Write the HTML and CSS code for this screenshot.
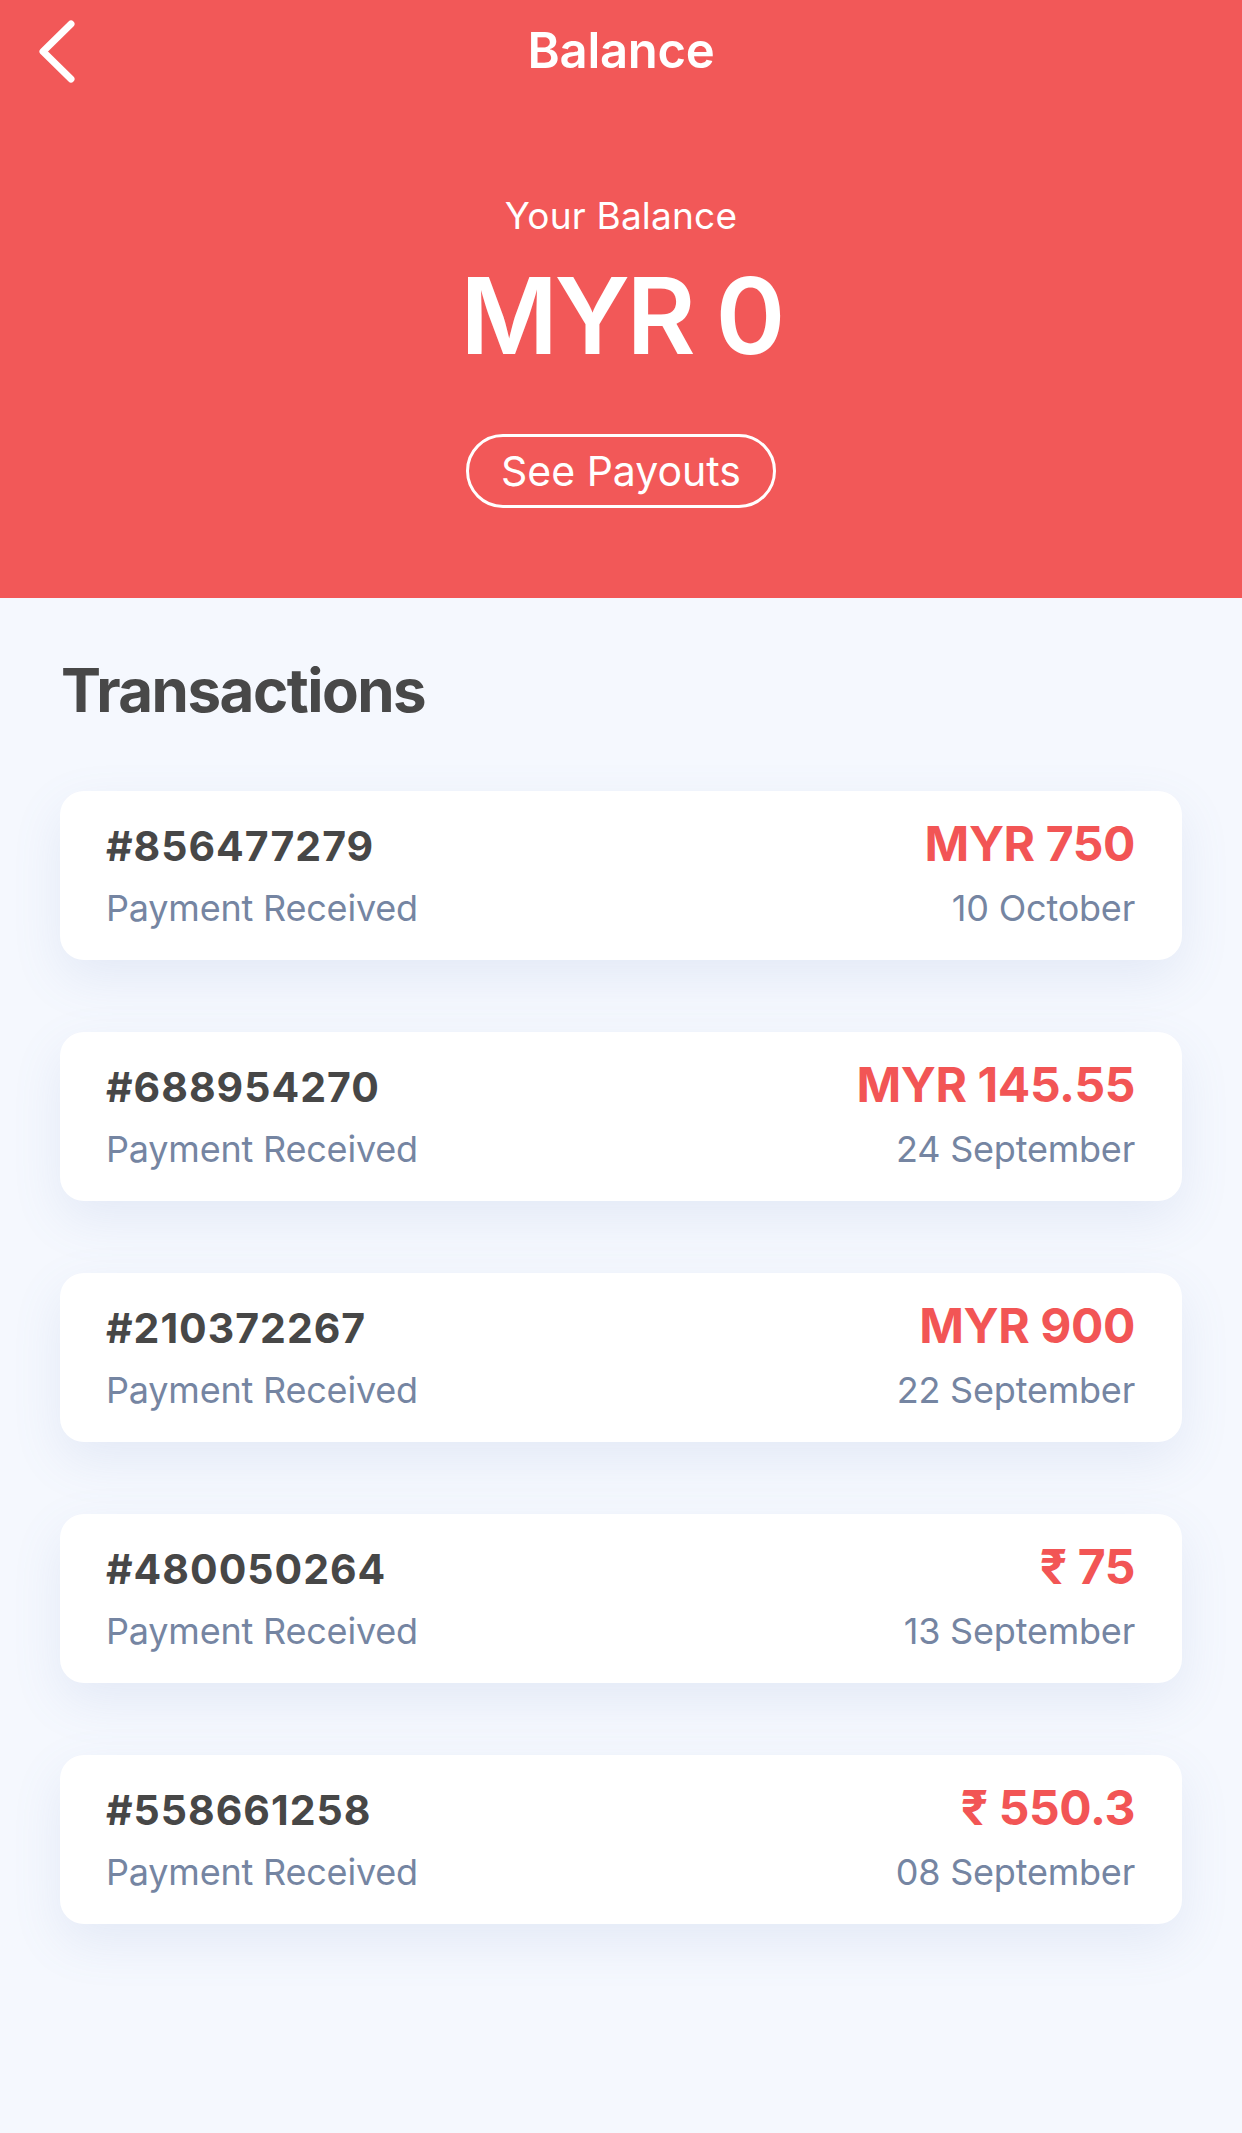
FILE: index.html
```html
<!DOCTYPE html>
<html lang="en">
<head>
<meta charset="utf-8">
<title>Balance</title>
<link rel="stylesheet" href="styles.css">
</head>
<body>
<div class="screen">
  <header class="hero">
    <div class="topbar">
      <button class="back" aria-label="Back">
        <svg width="48" height="72" viewBox="0 0 48 72"><path d="M39 8 L11 35.5 L39 63" fill="none" stroke="#fff" stroke-width="7" stroke-linecap="round" stroke-linejoin="round"/></svg>
      </button>
      <h1 class="title">Balance</h1>
      <span></span>
    </div>
    <div class="balance-label">Your Balance</div>
    <div class="balance-amount">MYR 0</div>
    <button class="payouts">See Payouts</button>
  </header>

  <main class="content">
    <h2 class="section-title">Transactions</h2>
    <ul class="tx-list">
      <li class="tx">
        <span class="tx-id">#856477279</span>
        <span class="tx-amount">MYR 750</span>
        <span class="tx-status">Payment Received</span>
        <span class="tx-date">10 October</span>
      </li>
      <li class="tx">
        <span class="tx-id">#688954270</span>
        <span class="tx-amount">MYR 145.55</span>
        <span class="tx-status">Payment Received</span>
        <span class="tx-date">24 September</span>
      </li>
      <li class="tx">
        <span class="tx-id">#210372267</span>
        <span class="tx-amount">MYR 900</span>
        <span class="tx-status">Payment Received</span>
        <span class="tx-date">22 September</span>
      </li>
      <li class="tx">
        <span class="tx-id">#480050264</span>
        <span class="tx-amount">₹ 75</span>
        <span class="tx-status">Payment Received</span>
        <span class="tx-date">13 September</span>
      </li>
      <li class="tx">
        <span class="tx-id">#558661258</span>
        <span class="tx-amount">₹ 550.3</span>
        <span class="tx-status">Payment Received</span>
        <span class="tx-date">08 September</span>
      </li>
    </ul>
  </main>
</div>
</body>
</html>
```

FILE: styles.css
```css
* { box-sizing: border-box; }

html, body {
  margin: 0;
  padding: 0;
}

body {
  background: #f5f8fe;
  font-family: Inter, "Noto Sans", "Liberation Sans", sans-serif;
  color: #474747;
}

.screen {
  width: 1242px;
  min-height: 2133px;
  background: #f5f8fe;
}

.hero {
  height: 598px;
  background: #f25858;
  color: #fff;
  display: flex;
  flex-direction: column;
  align-items: center;
}

.topbar {
  width: 100%;
  height: 101px;
  padding-top: 1px;
  display: grid;
  grid-template-columns: 1fr auto 1fr;
  align-items: start;
}

.back {
  justify-self: start;
  margin: 15px 0 0 32px;
  padding: 0;
  border: 0;
  background: none;
  width: 48px;
  height: 72px;
  display: block;
}

.back svg { display: block; }

.title {
  margin: 0;
  font-size: 49px;
  line-height: 100px;
  font-weight: 600;
  letter-spacing: -0.3px;
}

.balance-label {
  margin-top: 90px;
  font-size: 37px;
  line-height: 50px;
  font-weight: 400;
  letter-spacing: 0.2px;
}

.balance-amount {
  margin-top: 15px;
  font-size: 106px;
  line-height: 120px;
  font-weight: 600;
  letter-spacing: -3.5px;
}

.payouts {
  margin-top: 58px;
  width: 310px;
  height: 74px;
  border: 3px solid #fff;
  border-radius: 37px;
  background: transparent;
  color: #fff;
  font-family: inherit;
  font-size: 41px;
  line-height: 68px;
  padding: 0;
  font-weight: 400;
}

.content {
  padding: 52px 60px 80px;
}

.section-title {
  margin: 0 0 0 1px;
  font-size: 60px;
  line-height: 80px;
  font-weight: 700;
  color: #484848;
  letter-spacing: -1.5px;
}

.tx-list {
  list-style: none;
  margin: 61px 0 0;
  padding: 0;
  display: flex;
  flex-direction: column;
  gap: 72px;
}

.tx {
  height: 169px;
  background: #fff;
  border-radius: 24px;
  box-shadow: 0 18px 50px rgba(110, 130, 190, 0.12);
  padding: 25px 47px 0 46px;
  display: grid;
  grid-template-columns: 1fr auto;
  align-items: baseline;
  row-gap: 9px;
  align-content: start;
}

.tx-id {
  font-size: 41px;
  line-height: 56px;
  font-weight: 700;
  color: #474747;
  letter-spacing: 1px;
}

.tx-amount {
  justify-self: end;
  font-size: 48px;
  line-height: 56px;
  font-weight: 700;
  color: #f25555;
  letter-spacing: -0.4px;
}

.tx-status,
.tx-date {
  font-size: 36px;
  line-height: 50px;
  font-weight: 400;
  color: #7585a2;
  letter-spacing: -0.2px;
}

.tx-date {
  justify-self: end;
}
```
